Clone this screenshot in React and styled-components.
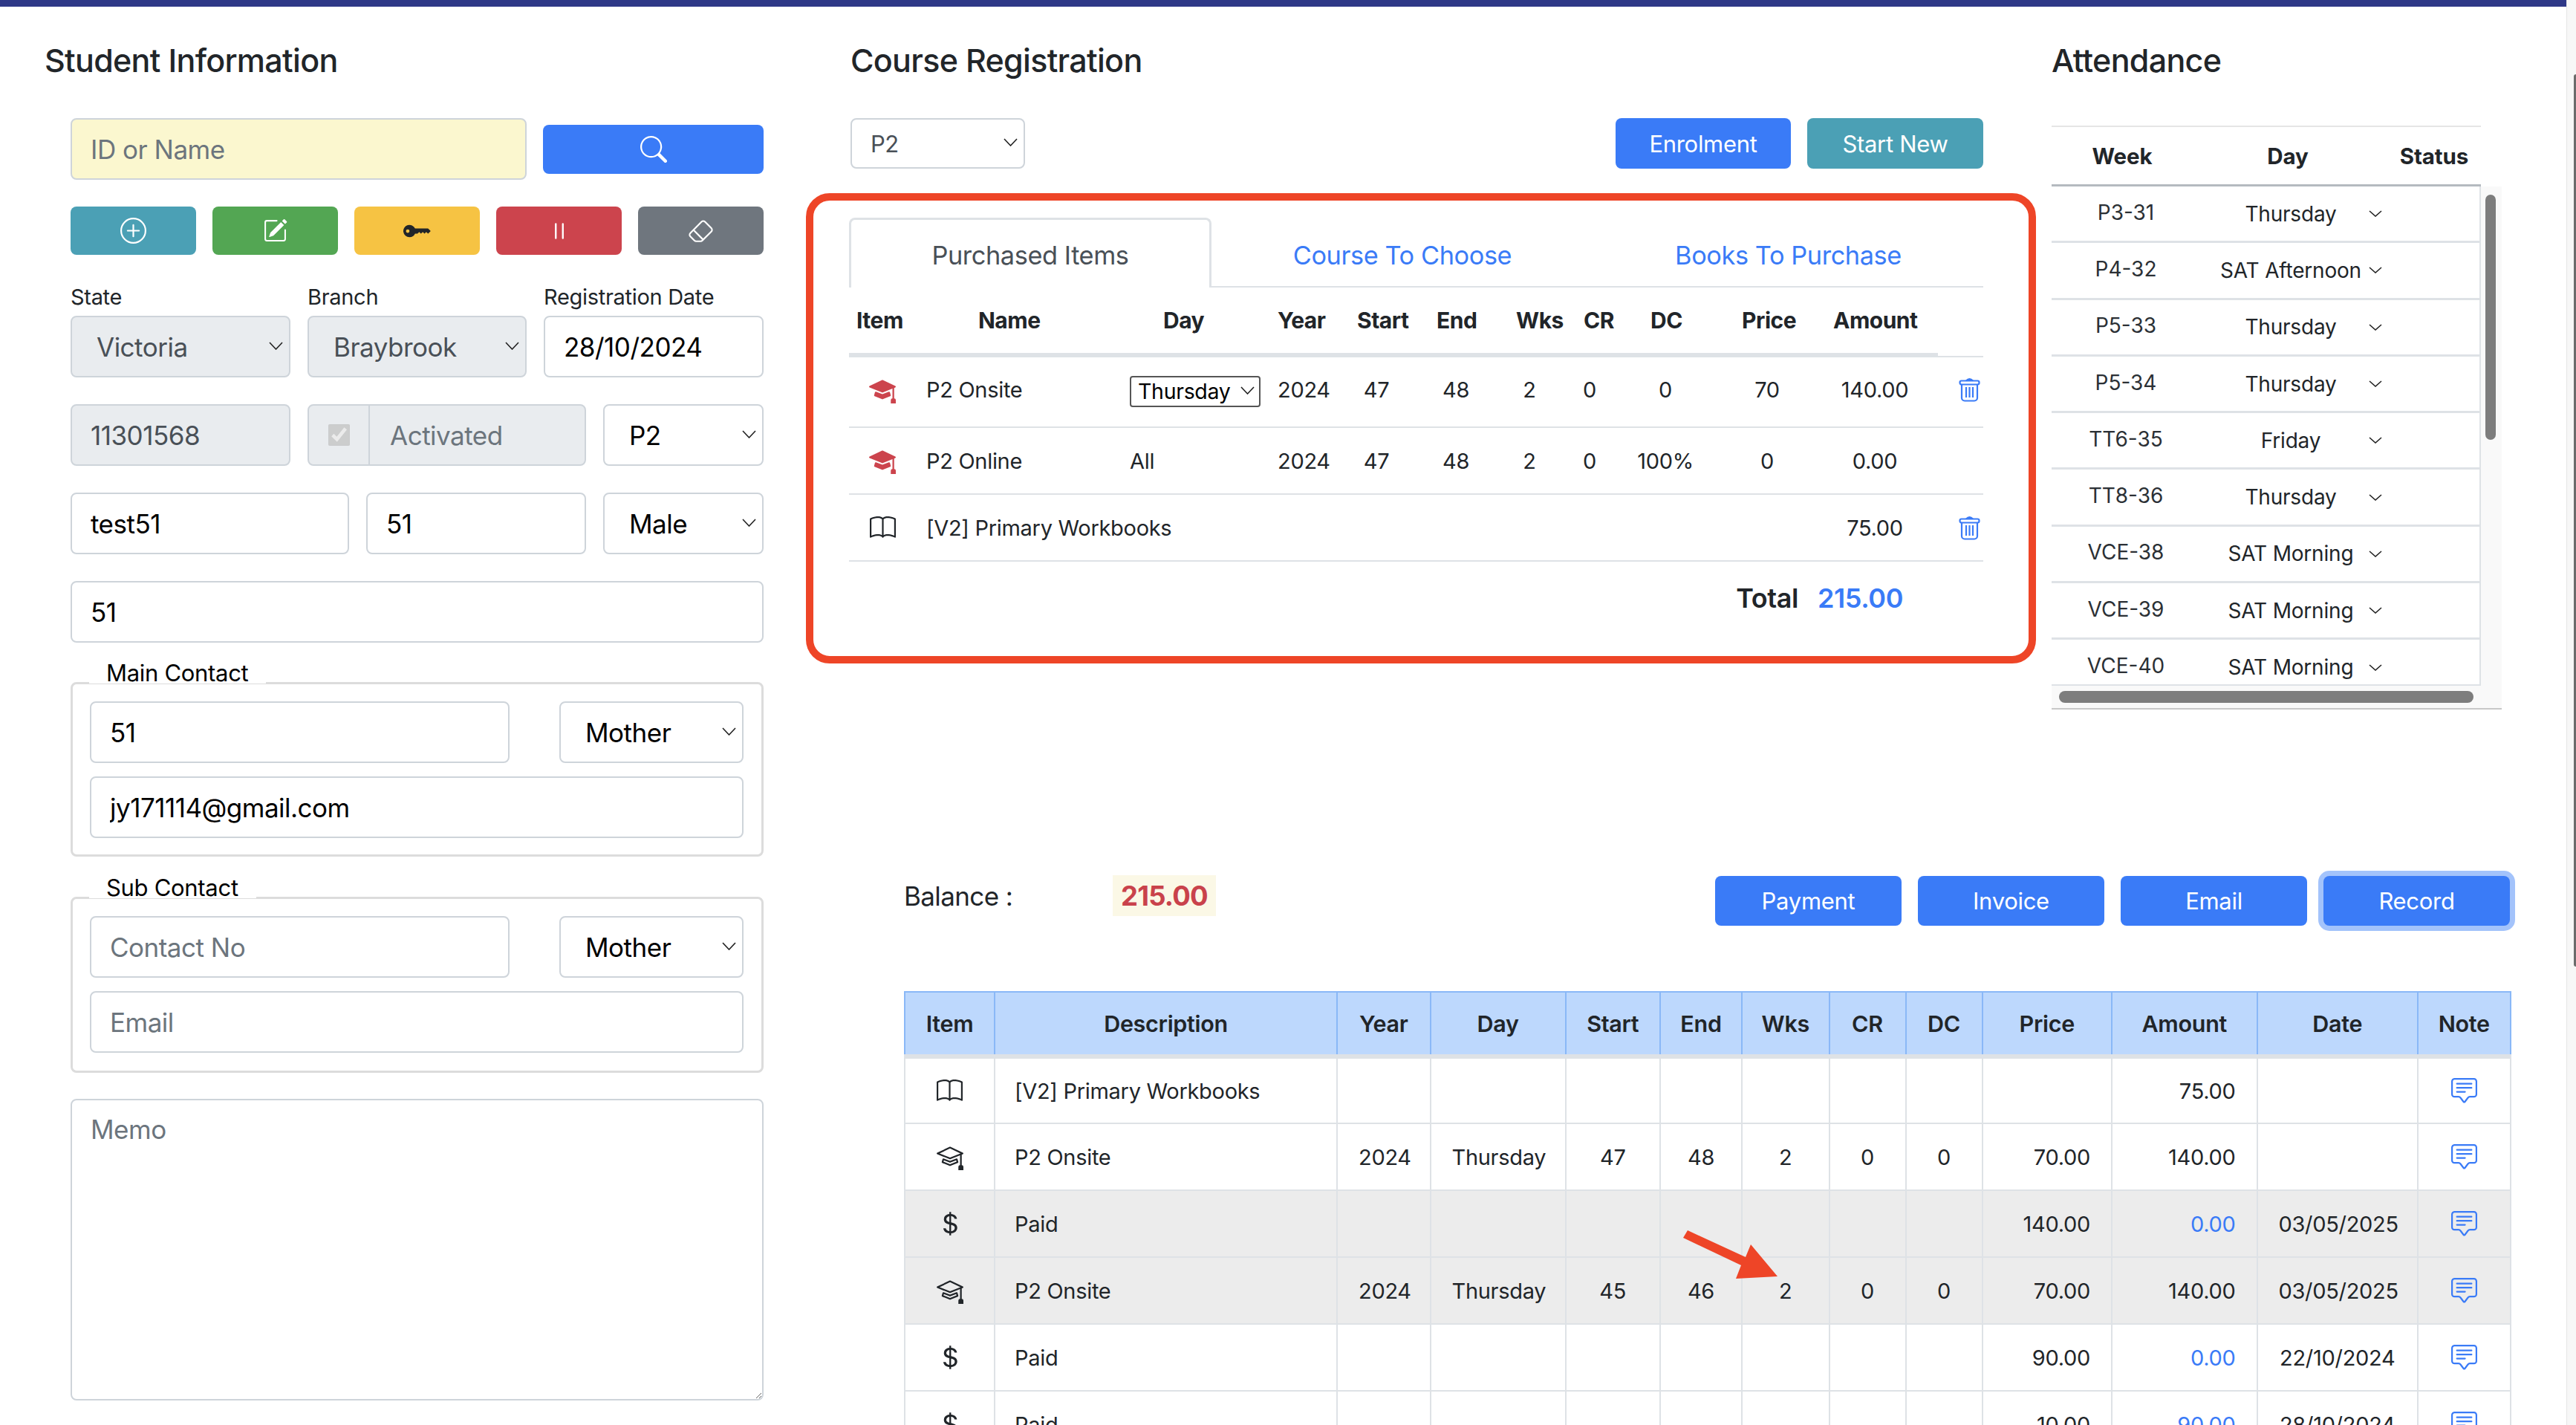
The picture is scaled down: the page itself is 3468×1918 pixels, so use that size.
import React from 'react';
import styled, { createGlobalStyle } from 'styled-components';
import {
  BsSearch, BsPlusCircle, BsPencilSquare, BsKeyFill, BsPause, BsEraser,
  BsBook, BsMortarboard, BsMortarboardFill, BsChatSquareText, BsCurrencyDollar,
} from 'react-icons/bs';

const BLUE = '#3a7bf7';
const BORDER = '#ced4da';
const LINE = '#dee2e6';

const GlobalStyle = createGlobalStyle`
  html, body { margin: 0; padding: 0; height: 100%; overflow: hidden; background: #fff; }
  body { font-family: Inter, "Liberation Sans", sans-serif; color: #212529; }
  * { box-sizing: border-box; }
`;

const Page = styled.div`
  display: flex;
  height: 1918px;
  overflow: hidden;
`;

const Main = styled.div`
  width: 3455px;
  flex: none;
`;

const PageTrack = styled.div`
  flex: 1;
  background: #f7f7f7;
  border-left: 1px solid #e6e6e6;
  padding: 100px 0 0 9px;
`;

const PageThumb = styled.div`
  height: 1201px;
  background: #6b6b6b;
  border-radius: 6px 0 0 6px;
`;

const TopBar = styled.div`
  height: 9px;
  background: #2e3887;
`;

const Content = styled.div`
  display: flex;
`;

const Title = styled.h4`
  margin: 42px 0 0 ${p => p.$indent || 0}px;
  height: 60px;
  font-size: 43px;
  line-height: 60px;
  font-weight: 500;
  letter-spacing: -0.7px;
`;

/* Left column */
const StudentColumn = styled.div`
  width: 1028px;
  flex: none;
  padding-left: 60px;
`;

const Form = styled.div`
  padding-left: 35px;
`;

const Row = styled.div`
  display: flex;
  gap: ${p => p.$gap || 23}px;
  align-items: ${p => p.$align || 'flex-end'};
  margin-top: ${p => p.$top || 0}px;
`;

const fieldBase = `
  display: block;
  height: 83px;
  border: 2px solid ${BORDER};
  border-radius: 8px;
  font-family: Inter, "Liberation Sans", sans-serif;
  font-size: 35px;
  outline: none;
`;

const Input = styled.input`
  ${fieldBase}
  width: ${p => (p.$w ? `${p.$w}px` : '100%')};
  flex: ${p => (p.$w ? 'none' : '1 1 auto')};
  padding: 0 25px;
  letter-spacing: -0.5px;
  color: ${p => (p.disabled ? '#495057' : '#000')};
  background: ${p => (p.$yellow ? '#fbf7cf' : p.disabled ? '#e9ecef' : '#fff')};
  &::placeholder { color: #6c757d; opacity: 1; }
`;

const SelectWrap = styled.div`
  position: relative;
  flex: none;
  width: ${p => p.$w}px;
`;

const NativeSelect = styled.select`
  ${fieldBase}
  width: 100%;
  height: ${p => (p.$small ? 68 : 83)}px;
  font-size: ${p => (p.$small ? 31 : 35)}px;
  padding: 0 0 0 ${p => (p.$small ? 25 : 33)}px;
  appearance: none;
  letter-spacing: -0.5px;
  color: ${p => (p.disabled ? '#495057' : p.$small ? '#495057' : '#000')};
  background: ${p => (p.disabled ? '#e9ecef' : '#fff')};
  opacity: 1;
`;

const ChevronMark = styled.svg`
  position: absolute;
  right: ${p => p.$right || 10}px;
  top: 50%;
  width: 19px;
  height: 11px;
  margin-top: -7px;
  fill: none;
  stroke: ${p => p.$color || '#222'};
  stroke-width: 1.6;
  pointer-events: none;
`;

const Chevron = ({ right, color }) => (
  <ChevronMark viewBox="0 0 19 11" $right={right} $color={color}>
    <polyline points="1,1 9.5,10 18,1" />
  </ChevronMark>
);

const Select = ({ w, value, disabled, small }) => (
  <SelectWrap $w={w}>
    <NativeSelect defaultValue={value} disabled={disabled} $small={small}>
      <option>{value}</option>
    </NativeSelect>
    <Chevron />
  </SelectWrap>
);

const Button = styled.button`
  width: ${p => (p.$w ? `${p.$w}px` : '100%')};
  height: ${p => p.$h || 67}px;
  flex: ${p => (p.$w ? 'none' : 1)};
  display: flex;
  align-items: center;
  justify-content: center;
  border: none;
  border-radius: 8px;
  background: ${p => p.$bg || BLUE};
  color: ${p => p.$fg || '#fff'};
  font-family: Inter, "Liberation Sans", sans-serif;
  font-size: 31px;
  letter-spacing: -0.3px;
  box-shadow: ${p => (p.$focus ? '0 0 0 7px #a3c3fb' : 'none')};
`;

const Label = styled.label`
  display: block;
  height: 40px;
  margin-bottom: 5px;
  font-size: 29px;
  line-height: 40px;
  letter-spacing: -0.3px;
`;

const LabelledField = styled.div`
  flex: none;
  width: ${p => p.$w}px;
`;

const CheckGroup = styled.div`
  flex: none;
  width: ${p => p.$w}px;
  height: 83px;
  display: flex;
  border: 2px solid ${BORDER};
  border-radius: 8px;
  background: #e9ecef;
  font-size: 35px;
  letter-spacing: -0.5px;
  color: #6c757d;
`;

const CheckAddon = styled.div`
  width: 82px;
  display: flex;
  align-items: center;
  justify-content: center;
  border-right: 2px solid ${BORDER};
`;

const CheckBox = styled.input`
  width: 29px;
  height: 29px;
  margin: 0;
`;

const CheckText = styled.div`
  display: flex;
  align-items: center;
  padding-left: 27px;
`;

const Legend = styled.div`
  position: relative;
  width: ${p => p.$w}px;
  height: 28px;
  margin: ${p => p.$top}px 0 -2px 25px;
  padding-left: 23px;
  background: #fff;
  font-size: 31px;
  line-height: 28px;
  letter-spacing: -0.3px;
  color: #000;
`;

const ContactBox = styled.div`
  height: ${p => p.$h}px;
  padding: 23px 24px 0 23px;
  border: 3px solid #dcdcdc;
  border-radius: 8px;
`;

const ContactStack = styled.div`
  display: flex;
  flex-direction: column;
  gap: 18px;
`;

const Memo = styled.textarea`
  display: block;
  width: 100%;
  height: 406px;
  margin-top: 35px;
  padding: 18px 25px;
  border: 2px solid ${BORDER};
  border-radius: 8px;
  font-family: Inter, "Liberation Sans", sans-serif;
  font-size: 35px;
  letter-spacing: -0.5px;
  outline: none;
  &::placeholder { color: #6c757d; opacity: 1; }
`;

/* Right of the student column */
const Workspace = styled.div`
  flex: 1;
`;

const TopRow = styled.div`
  display: flex;
`;

const CourseColumn = styled.div`
  width: 1527px;
  margin-left: 115px;
  flex: none;
`;

const CourseToolbar = styled.div`
  display: flex;
  align-items: center;
  gap: 22px;
  margin: 48px 0 0 2px;
`;

const Spacer = styled.div`
  flex: 1;
`;

const CoursePanel = styled.div`
  position: relative;
  margin-top: 66px;
`;

const RedFrame = styled.div`
  position: absolute;
  left: -58px;
  top: -33px;
  width: 1656px;
  height: 633px;
  border: 10px solid #ee4527;
  border-radius: 32px;
  pointer-events: none;
`;

const Tabs = styled.div`
  display: flex;
  height: 94px;
  border-bottom: 2px solid ${LINE};
`;

const Tab = styled.div`
  width: ${p => p.$w}px;
  height: ${p => (p.$active ? 94 : 92)}px;
  display: flex;
  align-items: center;
  justify-content: center;
  padding-top: ${p => (p.$active ? 3 : 8)}px;
  font-size: 34.3px;
  letter-spacing: -0.4px;
  color: ${p => (p.$active ? '#495057' : BLUE)};
  background: #fff;
  border: ${p => (p.$active ? `3px solid ${LINE}` : 'none')};
  border-bottom: none;
  border-radius: 8px 8px 0 0;
`;

const PickedHead = styled.div`
  border-bottom: 2px solid ${LINE};
`;

const PickedHeadRow = styled.div`
  width: 1466px;
  height: 94px;
  margin-bottom: -2px;
  padding-left: 10px;
  display: grid;
  grid-template-columns: 164px 249px 154px 107px 107px 107px 91px 90px 123px 123px 1fr;
  align-items: center;
  border-bottom: 6px solid ${LINE};
  font-size: 30px;
  font-weight: 700;
  letter-spacing: -0.5px;
`;

const PickedRow = styled.div`
  height: ${p => p.$h}px;
  padding-bottom: ${p => p.$pb || 0}px;
  display: grid;
  grid-template-columns: 90px 274px 199px 98px 98px 116px 82px 80px 124px 150px 140px 1fr;
  align-items: center;
  border-bottom: 2px solid ${LINE};
  font-size: 29px;
  letter-spacing: -0.3px;
`;

const PickedCell = styled.div`
  display: flex;
  align-items: center;
  justify-content: ${p => p.$align || 'center'};
  padding-left: ${p => (p.$align === 'flex-start' ? 14 : 0)}px;
  padding-right: ${p => (p.$align === 'flex-end' ? 4 : 0)}px;
  white-space: nowrap;
  color: ${p => p.$color || 'inherit'};
`;

const DaySelect = styled.div`
  position: relative;
  width: 176px;
  height: 42px;
  padding-left: 9px;
  margin-top: 5px;
  border: 2px solid #555;
  border-radius: 4px;
  font-size: 28.5px;
  line-height: 38px;
  color: #000;
`;

const TotalRow = styled.div`
  height: 98px;
  padding-right: 108px;
  display: flex;
  align-items: center;
  justify-content: flex-end;
  gap: 26px;
  font-size: 36px;
  font-weight: 600;
  letter-spacing: -0.4px;
`;

const TotalValue = styled.span`
  color: ${BLUE};
`;

/* Attendance */
const AttendanceColumn = styled.div`
  width: 606px;
  margin-left: 92px;
  flex: none;
`;

const AttendanceHead = styled.div`
  width: 578px;
  height: 82px;
  margin-top: 58px;
  display: grid;
  grid-template-columns: 190px 256px 138px;
  align-items: center;
  justify-items: center;
  border-top: 2px solid #e5e5e5;
  border-bottom: 3px solid #b5bac0;
  font-size: 29.5px;
  font-weight: 700;
  letter-spacing: -0.1px;
`;

const ScrollBox = styled.div`
  display: grid;
  grid-template-columns: 578px 28px;
  grid-template-rows: 672px 30px;
  border-bottom: 2px solid #c8c8c8;
`;

const ScrollView = styled.div`
  overflow: hidden;
  border-right: 2px solid ${LINE};
  border-bottom: 2px solid ${LINE};
`;

const AttendanceRow = styled.div`
  height: 76.3px;
  display: flex;
  align-items: center;
  border-bottom: 3px solid ${LINE};
  font-size: 28px;
  white-space: nowrap;
`;

const WeekCell = styled.div`
  width: 200px;
  flex: none;
  text-align: center;
  padding-bottom: 4px;
  color: #2b3035;
`;

const DayCell = styled.div`
  width: 188px;
  margin-left: 28px;
  flex: none;
  text-align: center;
  letter-spacing: -0.2px;
  display: flex;
  justify-content: center;
`;

const RowChevron = styled.svg`
  width: 18px;
  height: 9px;
  margin-left: 11px;
  fill: none;
  stroke: #222;
  stroke-width: 1.6;
`;

const VerticalTrack = styled.div`
  background: #f9f9f9;
  padding: 11px 0 0 6px;
  grid-row: span 2;
`;

const VerticalThumb = styled.div`
  width: 14px;
  height: 330px;
  border-radius: 7px;
  background: #7d7d7d;
`;

const HorizontalTrack = styled.div`
  background: #f9f9f9;
  padding: 7px 0 0 10px;
`;

const HorizontalThumb = styled.div`
  width: 558px;
  height: 16px;
  border-radius: 8px;
  background: #7d7d7d;
`;

/* Ledger */
const Ledger = styled.div`
  width: 2162px;
  margin: 224px 0 0 189px;
`;

const LedgerBar = styled.div`
  display: flex;
  align-items: center;
  gap: 22px;
  height: 67px;
`;

const BalanceLabel = styled.div`
  width: 283px;
  flex: none;
  margin-top: -14px;
  font-size: 35px;
  letter-spacing: -0.6px;
`;

const BalanceChip = styled.div`
  flex: none;
  margin: -14px 0 0 -24px;
  height: 55px;
  padding: 0 11px;
  display: flex;
  align-items: center;
  background: #fbf8e6;
  color: #c9424b;
  font-size: 36.5px;
  font-weight: 700;
  letter-spacing: -0.8px;
`;

const TableWrap = styled.div`
  position: relative;
  margin-top: 88px;
`;

const LedgerTable = styled.table`
  width: 2162px;
  table-layout: fixed;
  border-collapse: collapse;
  font-size: 29px;
  letter-spacing: -0.3px;
`;

const LedgerCol = styled.col`
  width: ${p => p.$w}px;
`;

const Th = styled.th`
  height: 87px;
  padding: 0;
  background: #bdd8fd;
  border: 2px solid #8ab8f7;
  border-bottom: 6px solid ${LINE};
  font-size: 30.5px;
  font-weight: 600;
  letter-spacing: -0.3px;
`;

const Tr = styled.tr`
  height: 90px;
  background: ${p => (p.$shaded ? '#ececec' : '#fff')};
`;

const Td = styled.td`
  padding: 0 28px 0 ${p => (p.$align === 'left' ? 26 : 28)}px;
  border: 2px solid ${LINE};
  text-align: ${p => p.$align || 'center'};
  color: ${p => p.$color || 'inherit'};
  white-space: nowrap;
`;

const IconTd = styled(Td)`
  padding: 0;
  line-height: 0;
`;

const TrashMark = styled.svg`
  width: 29px;
  height: 33px;
  fill: none;
  stroke: ${BLUE};
  stroke-width: 2.2;
`;

const Trash = () => (
  <TrashMark viewBox="0 0 29 33">
    <path d="M10 4.5 Q14.5 -0.5 19 4.5" fill={BLUE} />
    <rect x="1.5" y="4.5" width="26" height="5" rx="2.2" />
    <path d="M4 10 V27.5 a4 4 0 0 0 4 4 H21 a4 4 0 0 0 4 -4 V10" />
    <path d="M10 13 V27 M14.5 13 V27 M19 13 V27" />
  </TrashMark>
);

const RedArrow = styled.svg`
  position: absolute;
  left: 1042px;
  top: 317px;
  width: 140px;
  height: 75px;
  fill: #ee4527;
  pointer-events: none;
`;

const pickedHeads = ['Item', 'Name', 'Day', 'Year', 'Start', 'End', 'Wks', 'CR', 'DC', 'Price', 'Amount'];

const weeks = [
  ['P3-31', 'Thursday'],
  ['P4-32', 'SAT Afternoon'],
  ['P5-33', 'Thursday'],
  ['P5-34', 'Thursday'],
  ['TT6-35', 'Friday'],
  ['TT8-36', 'Thursday'],
  ['VCE-38', 'SAT Morning'],
  ['VCE-39', 'SAT Morning'],
  ['VCE-40', 'SAT Morning'],
];

const ledgerCols = [
  ['Item', 121], ['Description', 461], ['Year', 125.5], ['Day', 182], ['Start', 127.5],
  ['End', 110], ['Wks', 117.5], ['CR', 103], ['DC', 103], ['Price', 174.5],
  ['Amount', 195.5], ['Date', 216.5], ['Note', 124.5],
];

const bookIcon = <BsBook size={35} />;
const capIcon = <BsMortarboard size={36} />;
const paidIcon = <BsCurrencyDollar size={36} />;

const ledgerRows = [
  { icon: bookIcon, desc: '[V2] Primary Workbooks', amount: '75.00' },
  { icon: capIcon, desc: 'P2 Onsite', year: '2024', day: 'Thursday', start: '47', end: '48', wks: '2', cr: '0', dc: '0', price: '70.00', amount: '140.00' },
  { icon: paidIcon, desc: 'Paid', price: '140.00', amount: '0.00', paid: true, date: '03/05/2025', shaded: true },
  { icon: capIcon, desc: 'P2 Onsite', year: '2024', day: 'Thursday', start: '45', end: '46', wks: '2', cr: '0', dc: '0', price: '70.00', amount: '140.00', date: '03/05/2025', shaded: true },
  { icon: paidIcon, desc: 'Paid', price: '90.00', amount: '0.00', paid: true, date: '22/10/2024' },
  { icon: paidIcon, desc: 'Paid', price: '10.00', amount: '90.00', paid: true, date: '28/10/2024' },
];

const Contact = ({ label, legendWidth, legendTop, phone, email, height }) => (
  <>
    <Legend $w={legendWidth} $top={legendTop}>{label}</Legend>
    <ContactBox $h={height}>
      <ContactStack>
        <Row $gap={67}>
          <Input $w={565} placeholder="Contact No" defaultValue={phone} />
          <Select w={248} value="Mother" />
        </Row>
        <Input placeholder="Email" defaultValue={email} />
      </ContactStack>
    </ContactBox>
  </>
);

export default function App() {
  return (
    <Page>
      <GlobalStyle />
      <Main>
        <TopBar />
        <Content>
          <StudentColumn>
            <Title>Student Information</Title>
            <Form>
              <Row $gap={22} $align="center" $top={48}>
                <Input $w={614} $yellow placeholder="ID or Name" />
                <Button $h={66}><BsSearch size={36} /></Button>
              </Row>
              <Row $gap={22} $top={36}>
                <Button $h={65} $bg="#4ba0b5"><BsPlusCircle size={35} /></Button>
                <Button $h={65} $bg="#53a653"><BsPencilSquare size={33} /></Button>
                <Button $h={65} $bg="#f6c343" $fg="#212529"><BsKeyFill size={38} /></Button>
                <Button $h={65} $bg="#cc444d"><BsPause size={38} /></Button>
                <Button $h={65} $bg="#6f767e"><BsEraser size={35} /></Button>
              </Row>
              <Row $top={37}>
                <LabelledField $w={296}>
                  <Label>State</Label>
                  <Select w={296} value="Victoria" disabled />
                </LabelledField>
                <LabelledField $w={295}>
                  <Label>Branch</Label>
                  <Select w={295} value="Braybrook" disabled />
                </LabelledField>
                <LabelledField $w={296}>
                  <Label>Registration Date</Label>
                  <Input defaultValue="28/10/2024" />
                </LabelledField>
              </Row>
              <Row $top={36}>
                <Input $w={296} disabled defaultValue="11301568" />
                <CheckGroup $w={375}>
                  <CheckAddon><CheckBox type="checkbox" disabled defaultChecked /></CheckAddon>
                  <CheckText>Activated</CheckText>
                </CheckGroup>
                <Select w={216} value="P2" />
              </Row>
              <Row $top={36}>
                <Input $w={375} defaultValue="test51" />
                <Input $w={296} defaultValue="51" />
                <Select w={216} value="Male" />
              </Row>
              <Row $top={36}>
                <Input defaultValue="51" />
              </Row>
              <Contact label="Main Contact" legendWidth={238} legendTop={27} phone="51" email="jy171114@gmail.com" height={235} />
              <Contact label="Sub Contact" legendWidth={225} legendTop={28} height={237} />
              <Memo placeholder="Memo" />
            </Form>
          </StudentColumn>

          <Workspace>
            <TopRow>
              <CourseColumn>
                <Title $indent={2}>Course Registration</Title>
                <CourseToolbar>
                  <SelectWrap $w={235}>
                    <NativeSelect defaultValue="P2" $small><option>P2</option></NativeSelect>
                    <Chevron />
                  </SelectWrap>
                  <Spacer />
                  <Button $w={236} $h={68}>Enrolment</Button>
                  <Button $w={237} $h={68} $bg="#4ba0b5">Start New</Button>
                </CourseToolbar>
                <CoursePanel>
                  <Tabs>
                    <Tab $w={488} $active>Purchased Items</Tab>
                    <Tab $w={514}>Course To Choose</Tab>
                    <Tab $w={525}>Books To Purchase</Tab>
                  </Tabs>
                  <PickedHead>
                    <PickedHeadRow>
                      {pickedHeads.map(h => <div key={h}>{h}</div>)}
                    </PickedHeadRow>
                  </PickedHead>
                  <PickedRow $h={95} $pb={6}>
                    <PickedCell><BsMortarboardFill size={36} color="#cc444d" /></PickedCell>
                    <PickedCell $align="flex-start">P2 Onsite</PickedCell>
                    <PickedCell $align="flex-start">
                      <DaySelect>Thursday<Chevron right={6} /></DaySelect>
                    </PickedCell>
                    <PickedCell $align="flex-start">2024</PickedCell>
                    <PickedCell>47</PickedCell>
                    <PickedCell>48</PickedCell>
                    <PickedCell>2</PickedCell>
                    <PickedCell>0</PickedCell>
                    <PickedCell>0</PickedCell>
                    <PickedCell>70</PickedCell>
                    <PickedCell>140.00</PickedCell>
                    <PickedCell $align="flex-end"><Trash /></PickedCell>
                  </PickedRow>
                  <PickedRow $h={90}>
                    <PickedCell><BsMortarboardFill size={36} color="#cc444d" /></PickedCell>
                    <PickedCell $align="flex-start">P2 Online</PickedCell>
                    <PickedCell $align="flex-start">All</PickedCell>
                    <PickedCell $align="flex-start">2024</PickedCell>
                    <PickedCell>47</PickedCell>
                    <PickedCell>48</PickedCell>
                    <PickedCell>2</PickedCell>
                    <PickedCell>0</PickedCell>
                    <PickedCell>100%</PickedCell>
                    <PickedCell>0</PickedCell>
                    <PickedCell>0.00</PickedCell>
                    <PickedCell />
                  </PickedRow>
                  <PickedRow $h={90}>
                    <PickedCell><BsBook size={35} /></PickedCell>
                    <PickedCell $align="flex-start">[V2] Primary Workbooks</PickedCell>
                    <PickedCell />
                    <PickedCell />
                    <PickedCell />
                    <PickedCell />
                    <PickedCell />
                    <PickedCell />
                    <PickedCell />
                    <PickedCell />
                    <PickedCell>75.00</PickedCell>
                    <PickedCell $align="flex-end"><Trash /></PickedCell>
                  </PickedRow>
                  <TotalRow>
                    <span>Total</span>
                    <TotalValue>215.00</TotalValue>
                  </TotalRow>
                  <RedFrame />
                </CoursePanel>
              </CourseColumn>

              <AttendanceColumn>
                <Title>Attendance</Title>
                <AttendanceHead>
                  <div>Week</div>
                  <div>Day</div>
                  <div>Status</div>
                </AttendanceHead>
                <ScrollBox>
                  <ScrollView>
                    {weeks.map(([week, day]) => (
                      <AttendanceRow key={week}>
                        <WeekCell>{week}</WeekCell>
                        <DayCell>{day}</DayCell>
                        <RowChevron viewBox="0 0 18 9"><polyline points="1,1 9,8 17,1" /></RowChevron>
                      </AttendanceRow>
                    ))}
                  </ScrollView>
                  <VerticalTrack><VerticalThumb /></VerticalTrack>
                  <HorizontalTrack><HorizontalThumb /></HorizontalTrack>
                </ScrollBox>
              </AttendanceColumn>
            </TopRow>

            <Ledger>
              <LedgerBar>
                <BalanceLabel>Balance :</BalanceLabel>
                <BalanceChip>215.00</BalanceChip>
                <Spacer />
                <Button $w={251}>Payment</Button>
                <Button $w={251}>Invoice</Button>
                <Button $w={251}>Email</Button>
                <Button $w={251} $focus>Record</Button>
              </LedgerBar>
              <TableWrap>
                <LedgerTable>
                  <colgroup>
                    {ledgerCols.map(([name, w]) => <LedgerCol key={name} $w={w} />)}
                  </colgroup>
                  <thead>
                    <tr>
                      {ledgerCols.map(([name]) => <Th key={name}>{name}</Th>)}
                    </tr>
                  </thead>
                  <tbody>
                    {ledgerRows.map((r, i) => (
                      <Tr key={i} $shaded={r.shaded}>
                        <IconTd>{r.icon}</IconTd>
                        <Td $align="left">{r.desc}</Td>
                        <Td>{r.year}</Td>
                        <Td>{r.day}</Td>
                        <Td>{r.start}</Td>
                        <Td>{r.end}</Td>
                        <Td>{r.wks}</Td>
                        <Td>{r.cr}</Td>
                        <Td>{r.dc}</Td>
                        <Td $align="right">{r.price}</Td>
                        <Td $align="right" $color={r.paid ? BLUE : undefined}>{r.amount}</Td>
                        <Td>{r.date}</Td>
                        <IconTd><BsChatSquareText size={35} color={BLUE} /></IconTd>
                      </Tr>
                    ))}
                  </tbody>
                </LedgerTable>
                <RedArrow viewBox="0 0 140 75">
                  <polygon points="13,5 91,41 98,24 134,67 78,70 85,52 7,15" />
                </RedArrow>
              </TableWrap>
            </Ledger>
          </Workspace>
        </Content>
      </Main>
      <PageTrack><PageThumb /></PageTrack>
    </Page>
  );
}
